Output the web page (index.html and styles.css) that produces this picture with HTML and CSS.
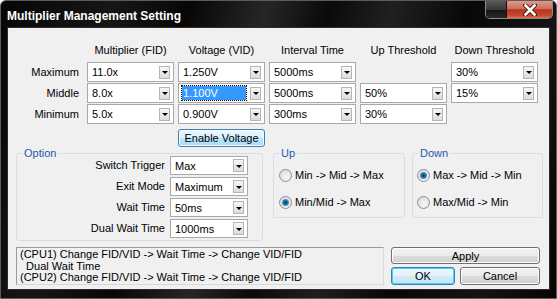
FILE: index.html
```html
<!DOCTYPE HTML><html><head>
  <meta charset="utf-8">
  <title>Multiplier Management Setting</title>
  <link rel="stylesheet" href="styles.css"></head><body>
<div class="window">
  <div class="titlebar">
    <span class="title">Multiplier Management Setting</span>
    <div class="caption-btns">
      <span class="cap-btn dark"></span>
      <span class="cap-btn close">
        <svg width="14" height="12" viewBox="0 0 14 12">
          <path d="M2 1 L12 11 M12 1 L2 11" stroke="#4a1208" stroke-width="4.5" stroke-linecap="round"/>
          <path d="M2.5 1.5 L11.5 10.5 M11.5 1.5 L2.5 10.5" stroke="#ffffff" stroke-width="2.6" stroke-linecap="square"/>
        </svg>
      </span>
    </div>
  </div>
  <div class="client">
    <div class="mgrid">
      <div></div>
      <div class="head">Multiplier (FID)</div>
      <div class="head">Voltage (VID)</div>
      <div class="head">Interval Time</div>
      <div class="head">Up Threshold</div>
      <div class="head">Down Threshold</div>

      <div class="rowlabel">Maximum</div>
      <div class="combo"><span class="val">11.0x</span><span class="arrow"></span></div>
      <div class="combo"><span class="val">1.250V</span><span class="arrow"></span></div>
      <div class="combo"><span class="val">5000ms</span><span class="arrow"></span></div>
      <div></div>
      <div class="combo"><span class="val">30%</span><span class="arrow"></span></div>

      <div class="rowlabel">Middle</div>
      <div class="combo"><span class="val">8.0x</span><span class="arrow"></span></div>
      <div class="combo"><span class="val sel">1.100V</span><span class="arrow"></span></div>
      <div class="combo"><span class="val">5000ms</span><span class="arrow"></span></div>
      <div class="combo"><span class="val">50%</span><span class="arrow"></span></div>
      <div class="combo"><span class="val">15%</span><span class="arrow"></span></div>

      <div class="rowlabel">Minimum</div>
      <div class="combo"><span class="val">5.0x</span><span class="arrow"></span></div>
      <div class="combo"><span class="val">0.900V</span><span class="arrow"></span></div>
      <div class="combo"><span class="val">300ms</span><span class="arrow"></span></div>
      <div class="combo"><span class="val">30%</span><span class="arrow"></span></div>
      <div></div>

      <button class="btn hot enable">Enable Voltage</button>
    </div>

    <div class="groups">
      <div class="group option">
        <div class="group-title">Option</div>
        <div class="opt-grid">
          <div class="optlabel">Switch Trigger</div>
          <div class="combo small"><span class="val">Max</span><span class="arrow"></span></div>
          <div class="optlabel">Exit Mode</div>
          <div class="combo small"><span class="val">Maximum</span><span class="arrow"></span></div>
          <div class="optlabel">Wait Time</div>
          <div class="combo small"><span class="val">50ms</span><span class="arrow"></span></div>
          <div class="optlabel">Dual Wait Time</div>
          <div class="combo small"><span class="val">1000ms</span><span class="arrow"></span></div>
        </div>
      </div>
      <div class="group up">
        <div class="group-title">Up</div>
        <div class="radios">
          <div class="radio"><span class="dot"></span>Min -&gt; Mid -&gt; Max</div>
          <div class="radio"><span class="dot on"></span>Min/Mid -&gt; Max</div>
        </div>
      </div>
      <div class="group down">
        <div class="group-title">Down</div>
        <div class="radios">
          <div class="radio"><span class="dot on"></span>Max -&gt; Mid -&gt; Min</div>
          <div class="radio"><span class="dot"></span>Max/Mid -&gt; Min</div>
        </div>
      </div>
    </div>

    <div class="bottom">
      <div class="log">(CPU1) Change FID/VID -&gt; Wait Time -&gt; Change VID/FID
  Dual Wait Time
(CPU2) Change FID/VID -&gt; Wait Time -&gt; Change VID/FID</div>
      <div class="actions">
        <button class="btn apply">Apply</button>
        <div class="okrow">
          <button class="btn default ok">OK</button>
          <button class="btn cancel">Cancel</button>
        </div>
      </div>
    </div>
  </div>
</div>
</body></html>
```

FILE: styles.css
```css
* {box-sizing: border-box}
body {
  margin: 0;
  background: #ffffff;
  font-family: "Liberation Sans", Arial, sans-serif;
  font-size: 11px;
  color: #000;
}
.window {
  width: 557px;
  height: 299px;
  display: flex;
  flex-direction: column;
  border: 1px solid #5c5c5c;
  border-radius: 6px 6px 0 0;
  background: linear-gradient(105deg, #060606 0%, #161616 18%, #070707 30%, #262626 42%, #0a0a0a 52%, #202020 62%, #080808 74%, #141414 88%, #050505 100%);
}
.titlebar {
  height: 26px;
  display: flex;
  justify-content: space-between;
  align-items: flex-start;
  padding-left: 6px;
  padding-right: 3px;
}
.title {
  color: #fff;
  font-weight: bold;
  font-size: 12px;
  margin-top: 8px;
}
.caption-btns {
  display: flex;
  border: 1px solid #8a8a8a;
  border-top: none;
  border-radius: 0 0 5px 5px;
  overflow: hidden;
  height: 18px;
}
.cap-btn {
  display: block;
  height: 17px;
}
.cap-btn.dark {
  width: 21px;
  background: linear-gradient(#5a5a5a, #383838 50%, #141414 51%, #2a2a2a);
  border-right: 1px solid #111;
}
.cap-btn.close {
  width: 45px;
  background: linear-gradient(#dd9a8c, #cf6f5c 45%, #b8321c 52%, #c64a30 85%, #e07050);
  display: flex;
  align-items: center;
  justify-content: center;
}
.client {
  flex: 1;
  margin: 0 6px 8px 6px;
  background: #f0f0f0;
  border: 1px solid #2c2c2c;
  padding-top: 13px;
}

/* multiplier table */
.mgrid {
  display: grid;
  grid-template-columns: 75px repeat(5, 87px);
  grid-template-rows: 20px repeat(3, 20px) 22px;
  column-gap: 4px;
  row-gap: 1px;
}
.head {
  text-align: center;
  line-height: 18px;
  white-space: nowrap;
}
.rowlabel {
  text-align: right;
  padding-right: 4px;
  line-height: 20px;
  white-space: nowrap;
}
.combo {
  background: #fff;
  border: 1px solid #a9a9a9;
  display: flex;
  align-items: center;
  justify-content: space-between;
  padding: 0 3px 0 3px;
  height: 20px;
}
.combo.small { height: 19px; }
.val {
  line-height: 14px;
  padding: 0 1px;
  white-space: nowrap;
}
.val.sel {
  background: #3399ff;
  color: #fff;
  outline: 1px dotted #000;
  width: 64px;
}
.arrow {
  width: 11px;
  height: 13px;
  border: 1px solid #b5b5b5;
  background: linear-gradient(#f6f6f6, #dcdcdc);
  display: flex;
  align-items: center;
  justify-content: center;
}
.arrow::after {
  content: "";
  border-left: 3px solid transparent;
  border-right: 3px solid transparent;
  border-top: 3px solid #000;
  margin-top: 1px;
}

/* buttons */
.btn {
  font-family: "Liberation Sans", Arial, sans-serif;
  font-size: 11px;
  color: #000;
  border: 1px solid #707070;
  border-radius: 3px;
  background: linear-gradient(#f2f2f2, #ebebeb 50%, #dddddd 51%, #cfcfcf);
  box-shadow: inset 0 0 0 1px #fcfcfc;
  padding: 0;
}
.btn.hot {
  border-color: #3c7fb1;
  background: linear-gradient(#eaf6fd, #d9f0fc 50%, #bee6fd 51%, #a7d9f5);
}
.btn.default {
  border-color: #3c7fb1;
  box-shadow: inset 0 0 0 1px #48d0fb;
  background: linear-gradient(#eef7fc, #e3f1fa 50%, #d3ecf9 51%, #c4e4f6);
}
.enable {
  grid-column: 3;
  grid-row: 5;
  margin-top: 4px;
  height: 18px;
}

/* group boxes */
.groups {
  display: flex;
  align-items: flex-start;
  padding-left: 8px;
  margin-top: 6px;
}
.group {
  border: 1px solid #d5dfe5;
  border-radius: 3px;
}
.group-title {
  width: max-content;
  margin: -7px 0 -4px 5px;
  padding: 0 2px;
  line-height: 13px;
  background: #f0f0f0;
  color: #1f5aa6;
}
.option {
  width: 247px;
  padding-bottom: 2px;
}
.opt-grid {
  display: grid;
  grid-template-columns: 148px 78px;
  grid-auto-rows: 19px;
  column-gap: 5px;
  row-gap: 2px;
}
.optlabel {
  text-align: right;
  line-height: 19px;
  white-space: nowrap;
}
.up {
  width: 132px;
  margin-left: 10px;
}
.down {
  width: 131px;
  margin-left: 7px;
}
.radios {
  display: flex;
  flex-direction: column;
  gap: 9px;
  padding: 10px 0 6px 5px;
}
.down .radios { padding-left: 4px; }
.radio {
  display: flex;
  align-items: center;
  gap: 3px;
  height: 18px;
  white-space: nowrap;
}
.dot {
  width: 13px;
  height: 13px;
  border-radius: 50%;
  border: 1px solid #8f8f8f;
  background: radial-gradient(circle at 60% 65%, #f8f8f8, #d4d4d4);
  display: flex;
  align-items: center;
  justify-content: center;
}
.dot.on::after {
  content: "";
  width: 7px;
  height: 7px;
  border-radius: 50%;
  background: radial-gradient(circle at 50% 50%, #0f3a60 0, #1b5a8c 30%, #58b4e4 80%, #9fdcf8 100%);
}

/* bottom row */
.bottom {
  display: flex;
  padding-left: 8px;
  margin-top: 6px;
}
.log {
  width: 368px;
  height: 38px;
  border: 1px solid #9a9a9a;
  border-right-color: #d8d8d8;
  border-bottom-color: #d8d8d8;
  background: #f0f0f0;
  white-space: pre;
  overflow: hidden;
  line-height: 11.5px;
  padding: 1px 0 0 3px;
}
.actions {
  margin-left: 7px;
  width: 149px;
  display: flex;
  flex-direction: column;
  gap: 3px;
}
.apply { height: 17px; }
.okrow {
  display: flex;
  gap: 5px;
}
.ok { width: 64px; height: 18px; }
.cancel { width: 80px; height: 18px; }
```
